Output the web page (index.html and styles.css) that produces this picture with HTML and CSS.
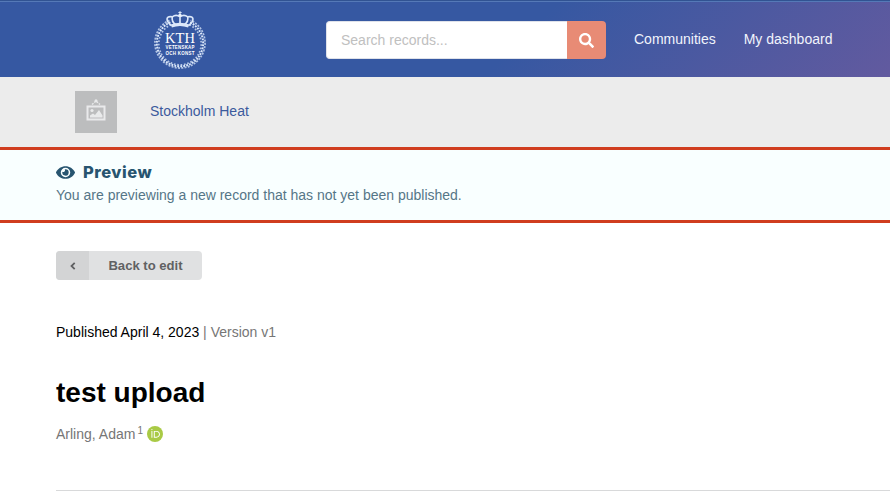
FILE: index.html
```html
<!DOCTYPE html>
<html lang="en">
<head>
<meta charset="utf-8">
<title>test upload</title>
<link rel="stylesheet" href="styles.css">
</head>
<body>
<header class="topbar">
  <a class="logo" href="#" aria-label="KTH">
    <svg width="54" height="60" viewBox="-1 -1 56 62">
      <g fill="none" stroke="#dce8fa">
        <path d="M17 11.500A24 24 0 1 0 37 11.500" stroke-width="2" stroke-dasharray="1.900 1.200"/>
        <path d="M16 9.500A26 26 0 1 0 38 9.500" stroke-width="1.800" stroke-dasharray="2.100 1.300" opacity=".75"/>
        <path d="M17.500 14A22 22 0 1 0 36.500 14" stroke-width="1.800" stroke-dasharray="1.800 1.700" opacity=".75"/>
        <path d="M18 15C11 9 13 5 19 6Q23 3 27 6Q31 3 35 6C41 5 43 9 36 15M19 6Q18 11 22.500 14M35 6Q36 11 31.500 14M27 6V14" stroke-width="1.700"/>
        <path d="M18 15.500Q27 12 36 15.500" stroke-width="3.500"/>
        <path d="M27 0V4M25.300 1.500H28.700" stroke-width="1"/>
      </g>
      <circle cx="27" cy="4.300" r="1.700" fill="#e8f0fc"/>
      <g fill="#fff" text-anchor="middle" class="logo-text">
        <text x="27" y="33" font-size="15.500" textLength="31" lengthAdjust="spacingAndGlyphs">KTH</text>
        <g class="logo-motto">
          <text x="27" y="39.500" font-size="4.600" textLength="30" lengthAdjust="spacing">VETENSKAP</text>
          <text x="27" y="45.300" font-size="4.600" textLength="30" lengthAdjust="spacing">OCH KONST</text>
        </g>
      </g>
    </svg>
  </a>
  <form class="search">
    <input type="text" placeholder="Search records..." aria-label="Search records">
    <button type="button" aria-label="Search"><svg width="15" height="15" viewBox="0 0 512 512"><path fill="#fff" d="M505 442.700L405.300 343c-4.500-4.500-10.600-7-17-7H372c27.600-35.300 44-79.700 44-128C416 93.100 322.900 0 208 0S0 93.100 0 208s93.100 208 208 208c48.300 0 92.700-16.400 128-44v16.300c0 6.400 2.500 12.500 7 17l99.700 99.700c9.400 9.400 24.600 9.400 33.900 0l28.300-28.300c9.400-9.400 9.400-24.600.1-34zM208 336c-70.700 0-128-57.200-128-128 0-70.700 57.200-128 128-128 70.700 0 128 57.200 128 128 0 70.700-57.200 128-128 128z"/></svg></button>
  </form>
  <nav class="nav"><a href="#">Communities</a><a href="#">My dashboard</a></nav>
</header>
<section class="community">
  <div class="thumb">
    <svg width="20" height="22" viewBox="0 0 20 22"><path d="M.5 6.500h19v15H.5zM2.500 8.500v11h15v-11z" fill="#e9eaeb" fill-rule="evenodd"/><path d="M4 18.500v-2l3-2 2 1.500 4-5 3.500 5.500v2z" fill="#e9eaeb"/><circle cx="6" cy="11.500" r="1.600" fill="#e9eaeb"/><path d="M6 5.500L10 2l4 3.500" fill="none" stroke="#e9eaeb" stroke-width="1.400" stroke-dasharray="2 1"/><circle cx="10" cy="1.700" r="1.500" fill="#e9eaeb"/></svg>
  </div>
  <a class="community-name" href="#">Stockholm Heat</a>
</section>
<section class="preview">
  <h2><svg width="19" height="17" viewBox="0 0 576 512"><path fill="#285570" d="M572.500 241.400C518.300 135.600 410.900 64 288 64S57.700 135.600 3.500 241.400a32.400 32.400 0 0 0 0 29.200C57.700 376.400 165.100 448 288 448s230.300-71.600 284.500-177.400a32.400 32.400 0 0 0 0-29.200zM288 400a144 144 0 1 1 144-144 143.900 143.900 0 0 1-144 144zm0-240a95.300 95.300 0 0 0-25.300 3.800 47.900 47.900 0 0 1-66.900 66.900A95.800 95.800 0 1 0 288 160z"/></svg><span>Preview</span></h2>
  <p>You are previewing a new record that has not yet been published.</p>
</section>
<main class="record">
  <button class="back" type="button"><span class="back-icon"><svg width="6" height="8" viewBox="0 0 6 8"><path d="M4.700.8L1.500 4l3.200 3.200" fill="none" stroke="#606163" stroke-width="1.800"/></svg></span><span class="back-label">Back to edit</span></button>
  <p class="meta"><b>Published April 4, 2023</b> | <span>Version v1</span></p>
  <h1>test upload</h1>
  <div class="creator"><span>Arling, Adam</span><sup>1</sup>
    <svg width="16" height="16" viewBox="0 0 256 256"><circle cx="128" cy="128" r="128" fill="#a9ca45"/><path fill="#fff" d="M70.900 79.100h15.400v107.100H70.900zM108.900 79.100h41.600c39.600 0 57 28.300 57 53.600 0 27.500-21.500 53.600-56.800 53.600h-41.800zm15.400 93.300h24.500c34.900 0 42.900-26.500 42.900-39.700 0-21.500-13.700-39.700-43.700-39.700h-23.700z"/><circle cx="78.600" cy="56.800" r="10.100" fill="#fff"/></svg>
  </div>
  <hr>
</main>
</body>
</html>
```
FILE: styles.css
```css
* { box-sizing: border-box; }
body {
  margin: 0;
  height: 501px;
  overflow: hidden;
  background: #fff;
  color: #000;
  font: 14px/20px "Liberation Sans", Arial, sans-serif;
}
a { color: inherit; text-decoration: none; }
svg { display: block; flex: none; }
h1, h2, p { margin: 0; }

.topbar {
  display: flex;
  align-items: center;
  height: 77px;
  padding: 3px 0 0 153px;
  background:
    linear-gradient(#315392 0 1px, #5579b7 1px 2px, transparent 2px),
    linear-gradient(135deg, #3658a2 0%, #3658a2 58%, #625a9f 100%);
}
.logo { margin-top: -1px; }
.logo-text { font-family: "Liberation Serif", serif; }
.logo-motto { font-family: "Liberation Sans", Arial, sans-serif; font-weight: 700; }
.search { display: flex; width: 280px; height: 38px; margin-left: 119px; }
.search input {
  width: 241px;
  padding: 0 14px;
  border: 1px solid #dfe2ea;
  border-right: 0;
  border-radius: 4px 0 0 4px;
  background: #fff;
  font: 14px "Liberation Sans", Arial, sans-serif;
}
.search input::placeholder { color: #c0c0c0; opacity: 1; }
.search button {
  display: flex;
  align-items: center;
  justify-content: center;
  width: 39px;
  padding: 0;
  border: 0;
  border-radius: 0 4px 4px 0;
  background: #e88b75;
}
.nav { display: flex; gap: 28px; margin: -2px 0 0 28px; color: #f1f4fc; }

.community {
  display: flex;
  align-items: center;
  gap: 33px;
  height: 70px;
  padding-left: 75px;
  background: #ececec;
  color: #3b5a9d;
}
.community-name { margin-top: -2px; }
.thumb {
  display: flex;
  justify-content: center;
  width: 42px;
  height: 42px;
  padding-top: 8px;
  background: #bcbdbe;
}

.preview {
  height: 76px;
  padding: 12px 0 0 56px;
  border: solid #d03d1f;
  border-width: 3px 0;
  background: #f9ffff;
  color: #557687;
}
.preview h2 {
  display: flex;
  align-items: center;
  gap: 8px;
  height: 20px;
  color: #285570;
  font: 800 16.5px/20px Inter, sans-serif;
  letter-spacing: .5px;
}
.preview p { margin-top: 3px; }

.record { padding: 28px 0 0 56px; }
.back {
  display: flex;
  width: 146px;
  height: 29px;
  padding: 0;
  border: 0;
  border-radius: 4px;
  overflow: hidden;
  background: #e0e1e2;
  color: #606163;
  font: 700 13.1px/29px "Liberation Sans", Arial, sans-serif;
}
.back-icon { display: flex; align-items: center; justify-content: center; width: 33px; height: 29px; background: #d3d4d5; }
.back-label { flex: 1; }
.meta { margin-top: 42px; color: #767676; }
.meta b { color: #000; font-weight: 400; }
h1 { margin-top: 35px; font-size: 28px; line-height: 32px; }
.creator { display: flex; align-items: center; height: 20px; margin-top: 15px; color: #767676; }
.creator sup { margin: -6px 4px 0 2px; font-size: 10px; line-height: 10px; }
hr { height: 1px; margin: 46px 0 0; border: 0; background: #d8d9da; }
```
